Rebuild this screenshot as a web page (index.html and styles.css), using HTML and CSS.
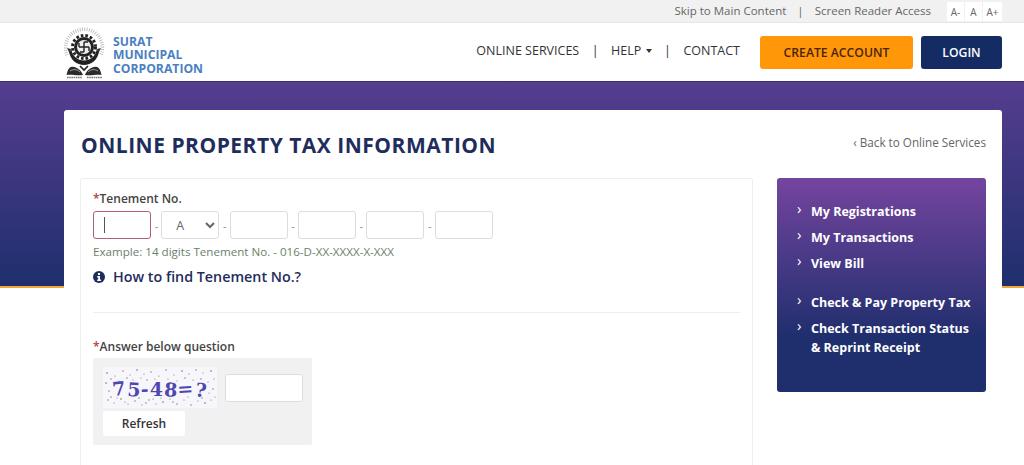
FILE: index.html

```html
<!DOCTYPE html>
<html lang="en">
<head>
    <meta charset="UTF-8">
    <meta name="viewport" content="width=device-width, initial-scale=1.0">
    <title>Online Property Tax Information</title>
    <link rel="stylesheet" href="styles.css">
</head>
<body>
    <div class="topbar">
        <a href="#">Skip to Main Content</a>
        <span class="topbar-sep">|</span>
        <a href="#">Screen Reader Access</a>
        <div class="font-size">
            <button>A-</button>
            <button>A</button>
            <button>A+</button>
        </div>
    </div>

    <header class="header">
        <a class="brand" href="#">
            <svg class="brand-logo" width="42" height="56" viewBox="0 0 42 56">
                <!-- rays -->
                <path d="M3 31A18.5 18.5 0 1 1 37 31" fill="none" stroke="#b0b0b0" stroke-width="3.5" stroke-dasharray=".8 1.5"/>
                <!-- gear -->
                <circle cx="20" cy="23" r="11.5" fill="none" stroke="#222" stroke-width="3" stroke-dasharray="2.6 2"/>
                <circle cx="20" cy="23" r="10" fill="#222"/>
                <circle cx="20" cy="23" r="7" fill="#eee"/>
                <path d="M20 18v10M15 23h10M20 18h4M20 28h-4M15 23v-4M25 23v4" fill="none" stroke="#222" stroke-width="1.4"/>
                <!-- crescent -->
                <path d="M5 27c1 9 8 14 15 14s14-5 15-14l-2.500-1c-1 6-6 10.500-12.500 10.500S8.500 32 7.500 26z" fill="#222"/>
                <path d="M3 24l4 1-1 5zM37 24l-4 1 1 5z" fill="#333"/>
                <!-- leaves -->
                <path d="M19 51c-2-5-7-9-12-8-2 .5-3.500 3-4.500 8 5-1 10 1 16.500 0z" fill="#2b2b2b"/>
                <path d="M21 51c2-5 7-9 12-8 2 .5 3.500 3 4.500 8-5-1-10 1-16.500 0z" fill="#2b2b2b"/>
                <path d="M6 47c3-2 7-2 10 1M34 47c-3-2-7-2-10 1" fill="none" stroke="#ccc" stroke-width=".7"/>
                <path d="M16 42l4 4 4-4" fill="none" stroke="#222" stroke-width="1.600"/>
                <!-- motto -->
                <path d="M3 53.500h15M23 53.500h15" stroke="#777" stroke-width="1.500" stroke-dasharray="1.600 .6"/>
            </svg>
            <span class="brand-name">SURAT<br>MUNICIPAL<br>CORPORATION</span>
        </a>
        <nav class="nav">
            <a href="#">ONLINE SERVICES</a>
            <span class="nav-sep">|</span>
            <a href="#">HELP <span class="caret"></span></a>
            <span class="nav-sep">|</span>
            <a href="#">CONTACT</a>
        </nav>
        <a class="btn btn-orange" href="#">CREATE ACCOUNT</a>
        <a class="btn btn-navy" href="#">LOGIN</a>
    </header>

    <div class="band"></div>

    <main class="card">
        <div class="card-head">
            <h1>ONLINE PROPERTY TAX INFORMATION</h1>
            <a class="back" href="#">&lsaquo; Back to Online Services</a>
        </div>

        <div class="card-body">
            <form class="form-box">
                <label class="field-label"><span class="req">*</span>Tenement No.</label>
                <div class="tenement">
                    <input class="input input-focus" type="text">
                    <span>-</span>
                    <select class="input select">
                        <option>A</option>
                    </select>
                    <span>-</span>
                    <input class="input" type="text">
                    <span>-</span>
                    <input class="input" type="text">
                    <span>-</span>
                    <input class="input" type="text">
                    <span>-</span>
                    <input class="input" type="text">
                </div>
                <p class="hint">Example: 14 digits Tenement No. - 016-D-XX-XXXX-X-XXX</p>
                <a class="how" href="#">
                    <svg width="12" height="12" viewBox="0 0 12 12">
                        <circle cx="6" cy="6" r="6" fill="#1f2d5c"/>
                        <rect x="5" y="2" width="2" height="2" fill="#fff"/>
                        <path d="M4.200 5h2.800v3.400h1V10H4.200V8.400h1V6.400h-1z" fill="#fff"/>
                    </svg>
                    How to find Tenement No.?
                </a>
                <hr class="divider">
                <label class="field-label"><span class="req">*</span>Answer below question</label>
                <div class="captcha-box">
                    <div class="captcha-row">
                        <div class="captcha-img">
                            <svg width="114" height="41" viewBox="0 0 114 41">
                                <g fill="#6f6f88">
                                    <circle cx="4" cy="6" r=".8"/><circle cx="12" cy="9" r=".6"/><circle cx="20" cy="4" r=".7"/><circle cx="27" cy="8" r=".6"/>
                                    <circle cx="34" cy="3" r=".8"/><circle cx="41" cy="7" r=".6"/><circle cx="48" cy="5" r=".7"/><circle cx="56" cy="9" r=".6"/>
                                    <circle cx="63" cy="3" r=".7"/><circle cx="71" cy="8" r=".6"/><circle cx="79" cy="4" r=".8"/><circle cx="86" cy="7" r=".6"/>
                                    <circle cx="93" cy="3" r=".7"/><circle cx="100" cy="6" r=".6"/><circle cx="108" cy="4" r=".8"/><circle cx="111" cy="12" r=".6"/>
                                    <circle cx="3" cy="16" r=".8"/><circle cx="6" cy="24" r=".7"/><circle cx="110" cy="22" r=".7"/><circle cx="112" cy="30" r=".6"/>
                                    <circle cx="5" cy="33" r=".7"/><circle cx="11" cy="36" r=".6"/><circle cx="18" cy="32" r=".8"/><circle cx="25" cy="37" r=".6"/>
                                    <circle cx="32" cy="34" r=".7"/><circle cx="39" cy="38" r=".6"/><circle cx="46" cy="33" r=".7"/><circle cx="53" cy="37" r=".6"/>
                                    <circle cx="60" cy="35" r=".8"/><circle cx="67" cy="32" r=".6"/><circle cx="74" cy="37" r=".7"/><circle cx="81" cy="33" r=".6"/>
                                    <circle cx="88" cy="38" r=".7"/><circle cx="95" cy="34" r=".6"/><circle cx="102" cy="36" r=".8"/><circle cx="108" cy="33" r=".6"/>
                                    <circle cx="65" cy="12" r=".6"/><circle cx="74" cy="14" r=".6"/><circle cx="30" cy="13" r=".6"/><circle cx="90" cy="13" r=".6"/>
                                    <circle cx="8" cy="12" r=".7"/><circle cx="16" cy="14" r=".5"/><circle cx="24" cy="11" r=".7"/><circle cx="38" cy="11" r=".5"/>
                                    <circle cx="44" cy="13" r=".7"/><circle cx="52" cy="12" r=".5"/><circle cx="82" cy="11" r=".7"/><circle cx="98" cy="12" r=".7"/>
                                    <circle cx="105" cy="15" r=".6"/><circle cx="8" cy="30" r=".7"/><circle cx="14" cy="31" r=".5"/><circle cx="36" cy="31" r=".7"/>
                                    <circle cx="50" cy="32" r=".6"/><circle cx="58" cy="31" r=".6"/><circle cx="70" cy="35" r=".7"/><circle cx="85" cy="30" r=".6"/>
                                    <circle cx="99" cy="31" r=".7"/><circle cx="22" cy="35" r=".6"/><circle cx="43" cy="36" r=".7"/><circle cx="106" cy="26" r=".6"/>
                                </g>
                                <text class="captcha-text" x="10" y="29" rotate="-6 3 -3 0 4 -4 8">75-48=?</text>
                            </svg>
                        </div>
                        <input class="input captcha-input" type="text">
                    </div>
                    <button class="refresh" type="button">Refresh</button>
                </div>
            </form>

            <aside class="side">
                <ul class="side-list">
                    <li><a href="#">My Registrations</a></li>
                    <li><a href="#">My Transactions</a></li>
                    <li><a href="#">View Bill</a></li>
                </ul>
                <ul class="side-list">
                    <li><a href="#">Check &amp; Pay Property Tax</a></li>
                    <li><a href="#">Check Transaction Status &amp; Reprint Receipt</a></li>
                </ul>
            </aside>
        </div>
    </main>
</body>
</html>
```

FILE: styles.css

```css
* {
    margin: 0;
    padding: 0;
    box-sizing: border-box;
}

html, body {
    height: 465px;
    overflow: hidden;
}

body {
    font-family: "Open Sans", sans-serif;
    background: #fff;
    color: #333;
}

a {
    color: inherit;
    text-decoration: none;
}

/* top strip */
.topbar {
    height: 23px;
    background: #f1f1f1;
    border-bottom: 1px solid #e6e6e6;
    display: flex;
    align-items: center;
    justify-content: flex-end;
    padding: 0 22px 2px 0;
    font-size: 11.5px;
    color: #666;
}

.topbar-sep {
    margin: 0 11px;
}

.font-size {
    display: flex;
    gap: 1px;
    margin-left: 16px;
    margin-top: 3px;
}

.font-size button {
    width: 17px;
    height: 19px;
    border: 0;
    background: #fff;
    font-family: inherit;
    font-size: 10px;
    color: #666;
}

.font-size button:last-child {
    width: 19px;
}

/* header */
.header {
    height: 58px;
    display: flex;
    align-items: center;
    padding: 0 22px 0 64px;
    background: #fff;
}

.brand {
    display: flex;
    align-items: center;
    gap: 7px;
    margin-right: auto;
}

.brand-name {
    font-size: 12.2px;
    line-height: 13.5px;
    font-weight: 700;
    color: #4a7fc1;
    margin-top: 6px;
}

.nav {
    display: flex;
    align-items: center;
    font-size: 12.5px;
    font-weight: 500;
    color: #333;
    margin-right: 20px;
    margin-top: -3px;
}

.nav-sep {
    margin: 0 12.5px;
    font-weight: 400;
    color: #333;
}

.caret {
    display: inline-block;
    border-top: 4px solid #333;
    border-left: 3.5px solid transparent;
    border-right: 3.5px solid transparent;
    vertical-align: 2px;
    margin-left: 1px;
}

.btn {
    height: 33px;
    display: flex;
    align-items: center;
    justify-content: center;
    border-radius: 3px;
    font-size: 12.2px;
    font-weight: 600;
}

.btn-orange {
    width: 153px;
    background: #ff9708;
    color: #4a2408;
}

.btn-navy {
    width: 81px;
    margin-left: 8px;
    background: #142b63;
    color: #fff;
}

/* coloured band behind the card */
.band {
    height: 207px;
    background: linear-gradient(180deg, #563d8f 0%, #1e2f6d 100%);
    border-top: 1px solid #3d2f6b;
    border-bottom: 2px solid #f0a63c;
}

.card {
    position: relative;
    margin: -178px 22px 0 64px;
    height: 500px;
    background: #fff;
    border-radius: 3px 3px 0 0;
    padding: 0 16px;
}

.card-head {
    height: 68px;
    display: flex;
    align-items: center;
    justify-content: space-between;
    padding: 2px 0 0 1px;
}

h1 {
    font-size: 21px;
    font-weight: 700;
    letter-spacing: 0.5px;
    color: #1f2d5c;
}

.back {
    font-size: 11.7px;
    color: #666;
    margin-top: -7px;
}

.card-body {
    display: flex;
    align-items: flex-start;
    justify-content: space-between;
}

/* left form */
.form-box {
    width: 673px;
    height: 400px;
    border: 1px solid #eee;
    border-radius: 2px;
    padding: 11px 12px;
}

.field-label {
    display: block;
    font-size: 12px;
    font-weight: 600;
    line-height: 17px;
    color: #444;
}

.req {
    color: #b03a3a;
}

.tenement {
    display: flex;
    align-items: center;
    gap: 3.67px;
    margin-top: 4px;
    font-size: 11px;
    color: #888;
}

.tenement span {
    width: 3px;
    text-align: center;
}

.input {
    width: 58px;
    height: 28px;
    border: 1px solid #ddd;
    border-radius: 3px;
    background: #fff;
    font-family: inherit;
    font-size: 12.5px;
    color: #666;
    outline: none;
}

.input-focus {
    border-color: #b0606e;
    /* text caret of the focused box */
    background: #fff linear-gradient(#555, #555) no-repeat 10px 5px / 1px 16px;
}

.select {
    padding-left: 10px;
}

.hint {
    margin-top: 4px;
    font-size: 11.6px;
    line-height: 17px;
    color: #6b7f6b;
}

.how {
    display: flex;
    align-items: center;
    gap: 8px;
    margin-top: 7px;
    font-size: 14.3px;
    font-weight: 600;
    line-height: 20px;
    color: #1f2d5c;
}

.divider {
    border: 0;
    border-top: 1px solid #eee;
    margin: 25px 0 25px;
}

.captcha-box {
    width: 219px;
    height: 87px;
    margin-top: 3px;
    padding: 9px 10px;
    background: #f1f1f1;
    border-radius: 2px;
}

.captcha-row {
    display: flex;
    align-items: center;
    gap: 8px;
}

.captcha-img {
    width: 114px;
    height: 41px;
    background: #f7f7fb;
}

.captcha-text {
    font-family: "DejaVu Serif", serif;
    font-size: 19px;
    font-weight: 700;
    letter-spacing: 0.8px;
    fill: #4f47b0;
}

.captcha-input {
    width: 78px;
    height: 28px;
    margin-top: 1px;
}

.refresh {
    display: block;
    width: 82px;
    height: 25px;
    margin-top: 3px;
    border: 1px solid #fff;
    border-radius: 2px;
    background: #fff;
    font-family: inherit;
    font-size: 12px;
    font-weight: 600;
    color: #333;
}

/* right menu */
.side {
    width: 209px;
    height: 214px;
    padding: 24px 12px 0 20px;
    border-radius: 3px;
    background: linear-gradient(180deg, #74459f 0%, #1f2e6d 75%);
    color: #fff;
}

.side-list {
    list-style: none;
    margin-bottom: 20px;
}

.side-list li {
    position: relative;
    padding-left: 14px;
    margin-bottom: 7px;
    font-size: 12.5px;
    font-weight: 700;
    line-height: 19px;
}

.side-list li::before {
    content: "›";
    position: absolute;
    left: 0;
    top: -3px;
    font-size: 15px;
    font-weight: 400;
}
```
